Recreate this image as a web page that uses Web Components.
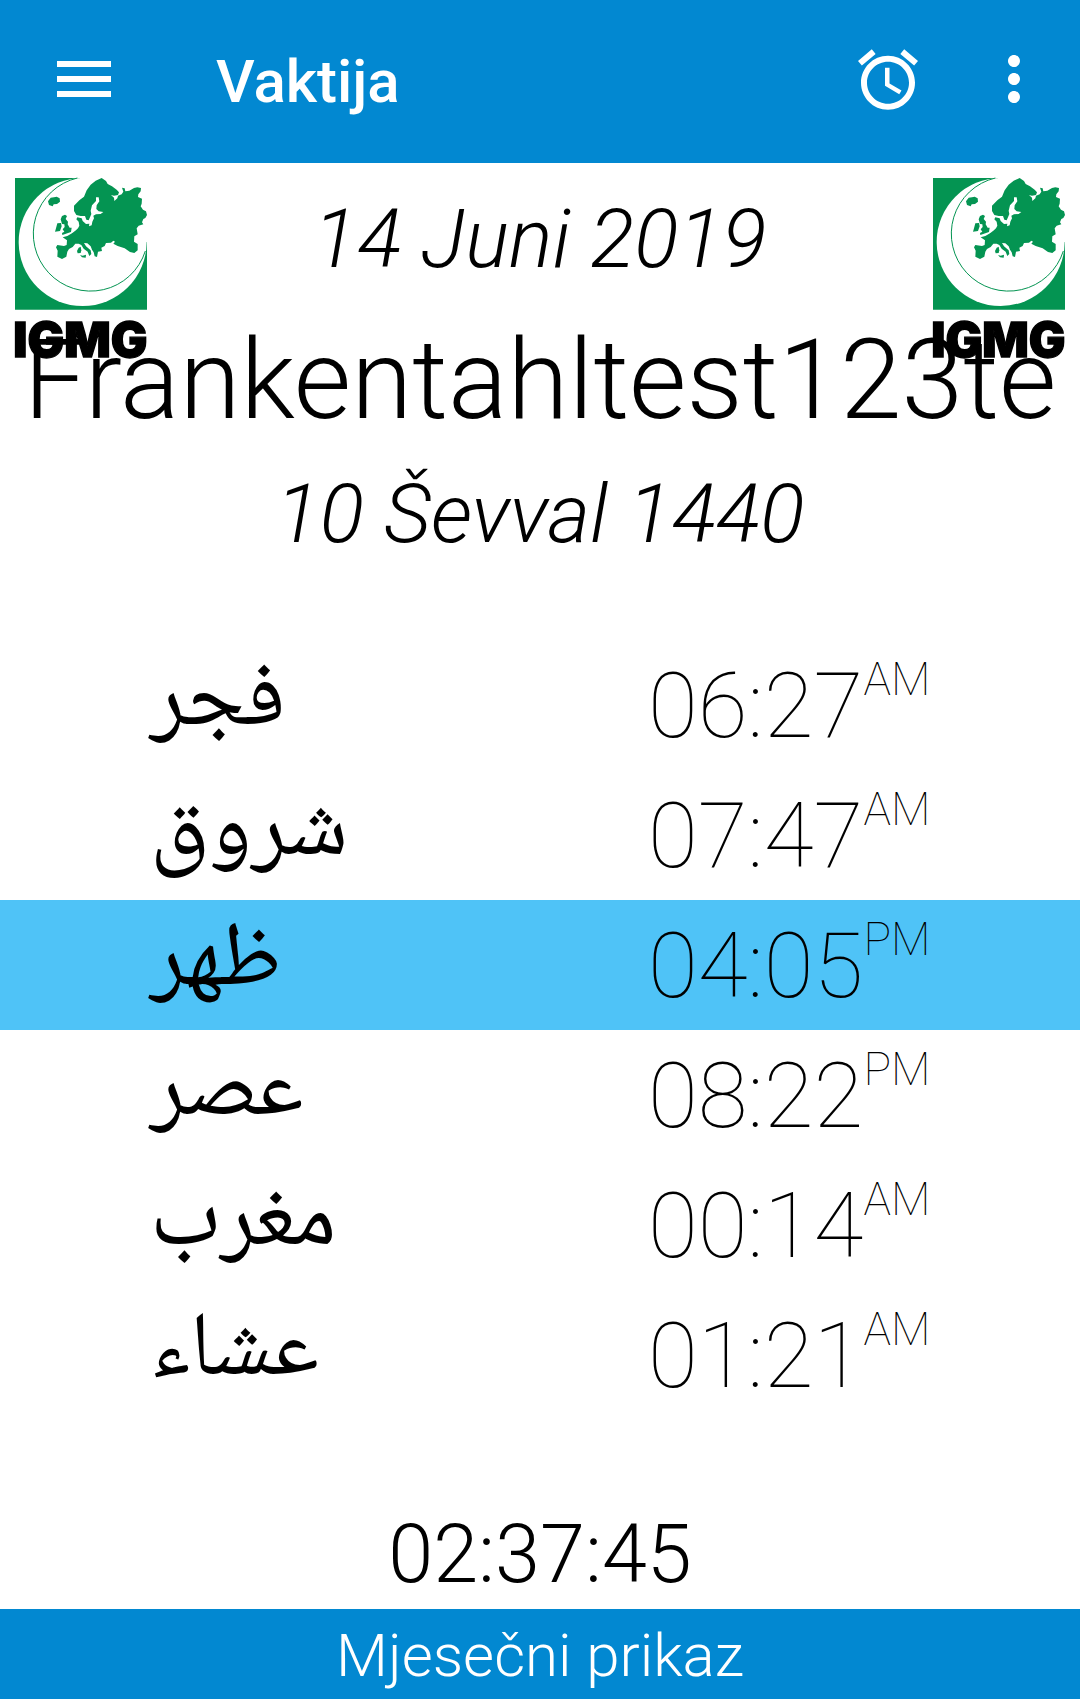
<!DOCTYPE html>
<html lang="bs">
<head>
<meta charset="utf-8">
<meta name="viewport" content="width=device-width, initial-scale=1">
<title>Vaktija</title>
<style>
  html, body { margin: 0; min-height: 100%; background: #fff; }
  body { font-family: Roboto, "Noto Sans", sans-serif; color: #000; }
</style>
</head>
<body>
<vaktija-app></vaktija-app>

<script>
const define = (name, html, setup) => {
  const template = document.createElement('template');
  template.innerHTML = html;
  customElements.define(name, class extends HTMLElement {
    constructor() {
      super();
      this.attachShadow({ mode: 'open' }).append(template.content.cloneNode(true));
    }
    connectedCallback() { if (setup) setup(this, this.shadowRoot); }
  });
};

define('app-bar', `
  <style>
    :host { display: flex; align-items: center; box-sizing: border-box; min-height: 163px;
            padding: 0 30px 0 48px; background: #0288d1; color: #fff; }
    h1 { flex: 1; margin: 0 0 0 96px; font-size: 60px; line-height: 70px; font-weight: 500; }
    button { display: block; flex: none; width: 72px; height: 72px; margin: 0 0 5px; padding: 0;
             border: 0; background: none; color: inherit; }
    .more { margin-left: 54px; }
    svg { display: block; width: 72px; height: 72px; fill: currentColor; }
  </style>
  <button aria-label="Meni"><svg viewBox="0 0 24 24"><path d="M3 18h18v-2H3v2zm0-5h18v-2H3v2zm0-7v2h18V6H3z"/></svg></button>
  <h1><slot></slot></h1>
  <button aria-label="Alarm"><svg viewBox="0 0 24 24"><path transform="translate(0 .25)" d="M22 5.720l-4.600-3.860-1.290 1.530 4.600 3.860L22 5.720zM7.880 3.390L6.600 1.860 2 5.710l1.290 1.530 4.590-3.850zM12.500 8H11v6l4.750 2.850.750-1.230-4-2.370V8zM12 4c-4.970 0-9 4.030-9 9s4.020 9 9 9c4.970 0 9-4.030 9-9s-4.030-9-9-9zm0 16c-3.870 0-7-3.130-7-7s3.130-7 7-7 7 3.130 7 7-3.130 7-7 7z"/></svg></button>
  <button class="more" aria-label="Više"><svg viewBox="0 0 24 24"><path d="M12 8c1.100 0 2-.9 2-2s-.9-2-2-2-2 .9-2 2 .9 2 2 2zm0 2c-1.100 0-2 .9-2 2s.9 2 2 2 2-.9 2-2-.9-2-2-2zm0 6c-1.100 0-2 .9-2 2s.9 2 2 2 2-.9 2-2-.9-2-2-2z"/></svg></button>
`);

define('igmg-logo', `
  <style>
    :host { display: block; width: 132px; }
    svg { display: block; width: 132px; height: 180px; overflow: visible; }
    text { font-family: Inter, Roboto, sans-serif; font-weight: 900; font-size: 146px; stroke: #000; stroke-width: 4px; }
  </style>
  <svg viewBox="45 39 396 540" role="img" aria-label="IGMG">
    <g fill="#049452">
      <path d="M45 39H441V434H45z"/>
      <path fill="#fff" d="M240 39H441V231H240z"/>
      <circle cx="248" cy="231" r="192" fill="#fff"/>
      <path d="M232 39A172 172 0 1 0 436 258" fill="none" stroke="#049452" stroke-width="3"/>
      <path d="M305 39L318 48 323 57 336 64 350 74 357 82 354 90 342 92 333 90 342 98 343 108 352 100 354 92 365 88 370 80 366 68 374 70 376 79 388 77 402 69 412 67 423 69 422 79 415 88 414 96 426 101 425 116 422 124 429 134 438 139 441 150 436 159 430 162 426 172 430 178 416 182 410 190 413 208 403 214 402 230 413 237 413 256 403 264 390 261 374 250 353 243 340 236 345 230 340 227 333 233 318 234 314 243 304 248 306 258 294 260 291 276 284 274 281 262 276 254 272 244 262 235 252 234 258 244 272 256 274 267 268 273 263 260 251 251 244 240 236 236 226 236 218 246 207 252 202 260 199 275 186 282 172 275 173 257 168 247 172 240 192 243 200 240 201 226 188 217 202 213 216 205 226 197 234 190 238 182 236 170 229 163 232 157 245 160 248 168 258 177 268 176 267 184 275 181 277 170 282 160 280 152 288 148 302 147 310 141 296 139 289 132 290 121 298 109 296 97 288 97 288 108 276 121 272 137 274 147 270 157 266 166 259 164 255 153 242 153 229 150 222 138 222 122 238 106 252 95 260 76 272 59 287 47z"/>
      <path d="M144 109L152 98 162 97 170 95 179 100 180 110 171 117 161 118 158 124 147 120z"/>
      <path d="M182 163L186 153 195 149 201 153 197 162 204 170 203 178 209 188 215 188 213 201 202 205 187 210 186 204 193 200 188 193 194 186 193 178 186 177z"/>
      <path d="M172 175L183 174 185 184 180 198 165 200 168 190z"/>
      <path d="M236 248L242 245 244 256 242 264 233 265 231 258z"/>
      <path d="M240 270L248 272 258 269 257 278 246 277z"/>
    </g>
    <text x="40" y="576">IGMG</text>
  </svg>
`);

define('day-header', `
  <style>
    :host { display: block; position: relative; padding: 28px 0 78px; text-align: center; font-weight: 300; }
    igmg-logo { position: absolute; top: 15px; }
    .start { left: 15px; }
    .end { right: 15px; }
    .text { position: relative; }
    p, h2 { margin: 0; font-weight: 300; white-space: nowrap; }
    p { font-size: 82px; line-height: 96px; font-style: italic; }
    h2 { margin: 28px 0 21px; font-size: 111px; line-height: 130px; }
  </style>
  <igmg-logo class="start"></igmg-logo>
  <igmg-logo class="end"></igmg-logo>
  <div class="text">
    <p><slot name="date"></slot></p>
    <h2><slot name="city"></slot></h2>
    <p><slot name="hijri"></slot></p>
  </div>
`);

define('prayer-times', `
  <style>
    :host { display: block; }
    table { width: 100%; border-collapse: collapse; table-layout: fixed; }
    tr { height: 130px; }
    tr.current { background: #4fc3f7; }
    th, td { padding: 0; text-align: left; vertical-align: middle; white-space: nowrap; }
    th { width: 60%; box-sizing: border-box; padding-left: 150px; font-size: 91px; line-height: 110px; font-weight: 400;
         font-family: "Noto Naskh Arabic", "Noto Sans Arabic", "DejaVu Sans", sans-serif; }
    td { padding-top: 2px; font-size: 91px; line-height: 106px; font-weight: 100; }
    .time { display: flex; align-items: flex-start; }
    small { font-size: 46px; line-height: 52px; }
  </style>
  <table><tbody></tbody></table>
`, (host, root) => {
  const rows = [
    ['فجر', '06:27', 'AM'],
    ['شروق', '07:47', 'AM'],
    ['ظهر', '04:05', 'PM'],
    ['عصر', '08:22', 'PM'],
    ['مغرب', '00:14', 'AM'],
    ['عشاء', '01:21', 'AM'],
  ];
  const current = Number(host.getAttribute('current'));
  root.querySelector('tbody').innerHTML = rows.map(([name, time, half], i) =>
    `<tr${i === current ? ' class="current"' : ''}><th scope="row" lang="ar">${name}</th>` +
    `<td><div class="time"><span>${time}</span><small>${half}</small></div></td></tr>`).join('');
});

define('count-down', `
  <style>
    :host { display: block; text-align: center; font-size: 81px; line-height: 95px; font-weight: 300; }
  </style>
  <slot></slot>
`);

define('month-button', `
  <style>
    :host { display: block; }
    button { display: block; width: 100%; margin: 0; padding: 4px 0 0; border: 0;
             background: #0288d1; color: #fff; font: 300 60px/86px Roboto, sans-serif; }
  </style>
  <button><slot></slot></button>
`);

define('vaktija-app', `
  <style>
    :host { display: flex; flex-direction: column; min-height: 100vh; overflow: hidden; }
    count-down { margin-top: auto; padding: 0 0 7px; }
  </style>
  <app-bar>Vaktija</app-bar>
  <day-header>
    <span slot="date">14 Juni 2019</span>
    <span slot="city">Frankentahltest123te</span>
    <span slot="hijri">10 Ševval 1440</span>
  </day-header>
  <prayer-times current="2"></prayer-times>
  <count-down>02:37:45</count-down>
  <month-button>Mjesečni prikaz</month-button>
`);
</script>
</body>
</html>
